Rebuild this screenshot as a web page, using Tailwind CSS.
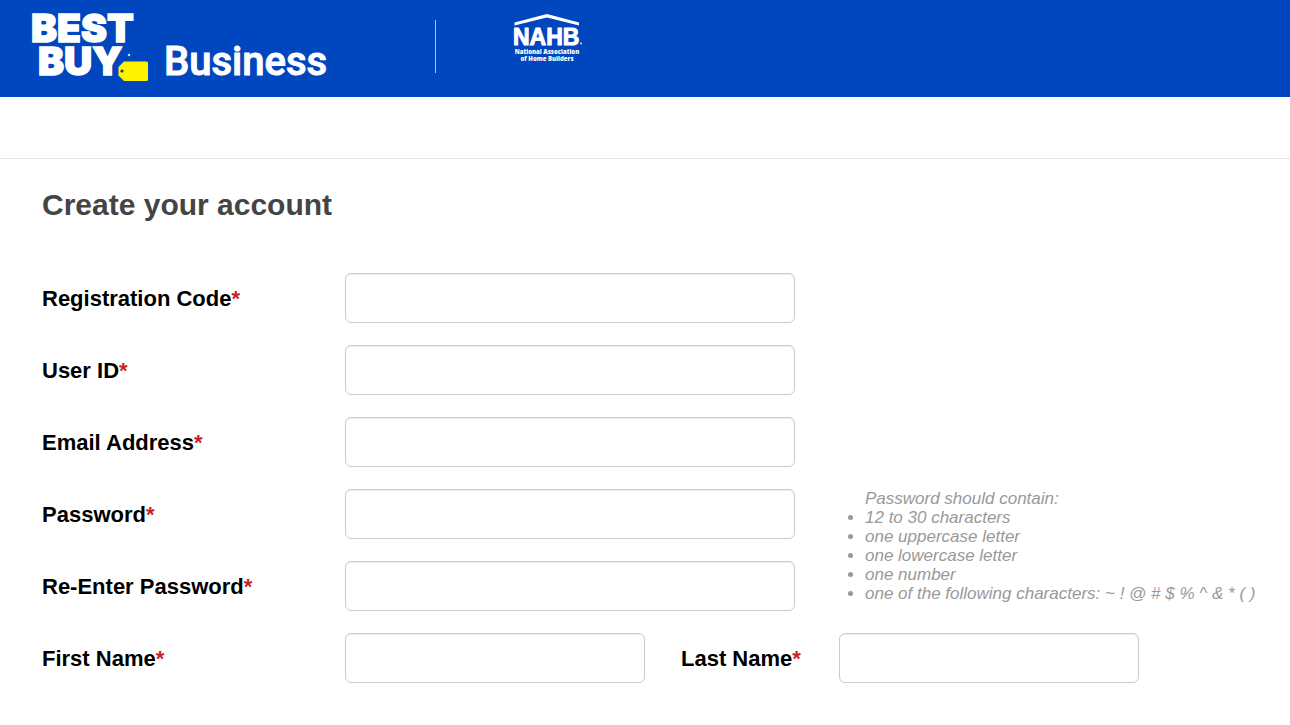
<!DOCTYPE html>
<html lang="en">
<head>
<meta charset="utf-8">
<meta name="viewport" content="width=device-width, initial-scale=1">
<title>Create your account</title>
<script src="https://cdn.jsdelivr.net/npm/@tailwindcss/browser@4"></script>
</head>
<body class="bg-white font-['Liberation_Sans',Arial,sans-serif] text-black">
<header class="flex h-[97px] items-start bg-[#0046be]">
  <svg class="h-[97px] w-[435px] shrink-0" viewBox="0 0 435 97" role="img" aria-label="Best Buy Business">
    <g fill="#fff" stroke="#fff" stroke-width="1.4" font-family="Inter, sans-serif" font-weight="900" font-size="39">
      <text x="31" y="42">BEST</text>
      <text x="38" y="75">BUY</text>
    </g>
    <circle cx="129" cy="55" r="1.2" fill="#cfe0ff"/>
    <path d="M124 61.500H146.500Q148 61.500 148 63V79.500Q148 81 146.500 81H124L118.500 75.500V67Z" fill="#fff200"/>
    <circle cx="122" cy="71" r="1.600" fill="#2f3a3a"/>
    <text x="164" y="75" fill="#fff" stroke="#fff" stroke-width="1" font-family="Roboto, sans-serif" font-weight="500" font-size="40">Business</text>
  </svg>
  <div class="mt-5 h-[53px] w-px shrink-0 bg-[#a9c2ee]"></div>
  <svg class="h-[97px] w-[170px] shrink-0" viewBox="436 0 170 97" role="img" aria-label="NAHB National Association of Home Builders">
    <path d="M514.500 25.500V22.500L547 14L579 22.500V25.500L547 17.500Z" fill="#fff"/>
    <text x="513" y="45" fill="#fff" font-family="Liberation Sans, sans-serif" font-weight="700" font-size="23" stroke="#fff" stroke-width="1">NAHB</text>
    <g fill="#fff" font-family="Open Sans, sans-serif" font-weight="800" font-size="6" text-anchor="middle">
      <text x="547" y="54">National Association</text>
      <text x="547" y="61">of Home Builders</text>
    </g>
    <circle cx="581" cy="43.500" r="1" fill="#cfe0ff"/>
  </svg>
</header>
<div class="h-[62px] border-b border-[#e6e6e6]"></div>
<main class="pt-7 pr-5 pb-8 pl-[42px]">
  <h1 class="text-[30px] leading-9 font-bold text-[#444]">Create your account</h1>
  <form class="mt-[50px] flex flex-col gap-[22px] text-[22px] font-bold">
    <div class="flex items-center">
      <label for="code" class="w-[303px] shrink-0">Registration Code<span class="text-[#cc1f1f]">*</span></label>
      <input id="code" type="text" required class="h-[50px] w-full max-w-[450px] min-w-0 rounded-md border border-[#ccc] bg-white px-3 font-normal shadow-[inset_0_1px_1px_rgba(0,0,0,0.08)]">
    </div>
    <div class="flex items-center">
      <label for="user" class="w-[303px] shrink-0">User ID<span class="text-[#cc1f1f]">*</span></label>
      <input id="user" type="text" required class="h-[50px] w-full max-w-[450px] min-w-0 rounded-md border border-[#ccc] bg-white px-3 font-normal shadow-[inset_0_1px_1px_rgba(0,0,0,0.08)]">
    </div>
    <div class="flex items-center">
      <label for="email" class="w-[303px] shrink-0">Email Address<span class="text-[#cc1f1f]">*</span></label>
      <input id="email" type="email" required class="h-[50px] w-full max-w-[450px] min-w-0 rounded-md border border-[#ccc] bg-white px-3 font-normal shadow-[inset_0_1px_1px_rgba(0,0,0,0.08)]">
    </div>
    <div class="flex flex-wrap items-start gap-x-[70px] gap-y-5">
      <div class="flex w-full max-w-[753px] flex-col gap-[22px]">
        <div class="flex items-center">
          <label for="pass" class="w-[303px] shrink-0">Password<span class="text-[#cc1f1f]">*</span></label>
          <input id="pass" type="password" required aria-describedby="rules" class="h-[50px] w-full max-w-[450px] min-w-0 rounded-md border border-[#ccc] bg-white px-3 font-normal shadow-[inset_0_1px_1px_rgba(0,0,0,0.08)]">
        </div>
        <div class="flex items-center">
          <label for="pass2" class="w-[303px] shrink-0">Re-Enter Password<span class="text-[#cc1f1f]">*</span></label>
          <input id="pass2" type="password" required class="h-[50px] w-full max-w-[450px] min-w-0 rounded-md border border-[#ccc] bg-white px-3 font-normal shadow-[inset_0_1px_1px_rgba(0,0,0,0.08)]">
        </div>
      </div>
      <div id="rules" class="text-[17px] leading-[19px] font-normal text-[#999] italic">
        <p>Password should contain:</p>
        <ul class="list-disc">
          <li>12 to 30 characters</li>
          <li>one uppercase letter</li>
          <li>one lowercase letter</li>
          <li>one number</li>
          <li>one of the following characters: ~ ! @ # $ % ^ &amp; * ( )</li>
        </ul>
      </div>
    </div>
    <div class="flex flex-wrap items-center gap-x-9 gap-y-[22px]">
      <div class="flex items-center">
        <label for="first" class="w-[303px] shrink-0">First Name<span class="text-[#cc1f1f]">*</span></label>
        <input id="first" type="text" required class="h-[50px] w-[300px] min-w-0 rounded-md border border-[#ccc] bg-white px-3 font-normal shadow-[inset_0_1px_1px_rgba(0,0,0,0.08)]">
      </div>
      <div class="flex items-center">
        <label for="last" class="w-[158px] shrink-0">Last Name<span class="text-[#cc1f1f]">*</span></label>
        <input id="last" type="text" required class="h-[50px] w-[300px] min-w-0 rounded-md border border-[#ccc] bg-white px-3 font-normal shadow-[inset_0_1px_1px_rgba(0,0,0,0.08)]">
      </div>
    </div>
  </form>
</main>
</body>
</html>
